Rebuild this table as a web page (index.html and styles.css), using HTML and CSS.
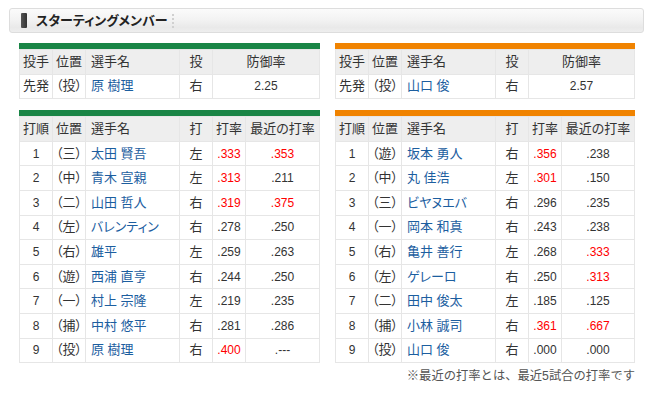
FILE: index.html
```html
<!DOCTYPE html>
<html lang="ja">
<head>
<meta charset="utf-8">
<link rel="stylesheet" href="styles.css">
</head>
<body>
<div class="page">
  <div class="title-bar">
    <span class="title-mark"></span>
    <h2 class="title">スターティングメンバー</h2>
    <span class="title-sep"></span>
  </div>

  <div class="grid">
    <div class="lineup green">
      <table class="tbl pitch">
        <colgroup><col class="c1"><col class="c2"><col class="c3"><col class="c4"><col class="c5"></colgroup>
        <tr class="head"><th>投手</th><th>位置</th><th class="name">選手名</th><th>投</th><th>防御率</th></tr>
        <tr><td>先発</td><td>（投）</td><td class="name">原 樹理</td><td>右</td><td class="num">2.25</td></tr>
      </table>
    </div>
    <div class="lineup orange">
      <table class="tbl pitch">
        <colgroup><col class="c1"><col class="c2"><col class="c3"><col class="c4"><col class="c5"></colgroup>
        <tr class="head"><th>投手</th><th>位置</th><th class="name">選手名</th><th>投</th><th>防御率</th></tr>
        <tr><td>先発</td><td>（投）</td><td class="name">山口 俊</td><td>右</td><td class="num">2.57</td></tr>
      </table>
    </div>

    <div class="lineup green">
      <table class="tbl bat">
        <colgroup><col class="c1"><col class="c2"><col class="c3"><col class="c4"><col class="c5"><col class="c6"></colgroup>
        <tr class="head"><th>打順</th><th>位置</th><th class="name">選手名</th><th>打</th><th>打率</th><th>最近の打率</th></tr>
        <tr><td class="num">1</td><td>（三）</td><td class="name">太田 賢吾</td><td>左</td><td class="num hot">.333</td><td class="num hot">.353</td></tr>
        <tr><td class="num">2</td><td>（中）</td><td class="name">青木 宣親</td><td>左</td><td class="num hot">.313</td><td class="num">.211</td></tr>
        <tr><td class="num">3</td><td>（二）</td><td class="name">山田 哲人</td><td>右</td><td class="num hot">.319</td><td class="num hot">.375</td></tr>
        <tr><td class="num">4</td><td>（左）</td><td class="name">バレンティン</td><td>右</td><td class="num">.278</td><td class="num">.250</td></tr>
        <tr><td class="num">5</td><td>（右）</td><td class="name">雄平</td><td>左</td><td class="num">.259</td><td class="num">.263</td></tr>
        <tr><td class="num">6</td><td>（遊）</td><td class="name">西浦 直亨</td><td>右</td><td class="num">.244</td><td class="num">.250</td></tr>
        <tr><td class="num">7</td><td>（一）</td><td class="name">村上 宗隆</td><td>左</td><td class="num">.219</td><td class="num">.235</td></tr>
        <tr><td class="num">8</td><td>（捕）</td><td class="name">中村 悠平</td><td>右</td><td class="num">.281</td><td class="num">.286</td></tr>
        <tr><td class="num">9</td><td>（投）</td><td class="name">原 樹理</td><td>右</td><td class="num hot">.400</td><td class="num">.---</td></tr>
      </table>
    </div>
    <div class="lineup orange">
      <table class="tbl bat">
        <colgroup><col class="c1"><col class="c2"><col class="c3"><col class="c4"><col class="c5"><col class="c6"></colgroup>
        <tr class="head"><th>打順</th><th>位置</th><th class="name">選手名</th><th>打</th><th>打率</th><th>最近の打率</th></tr>
        <tr><td class="num">1</td><td>（遊）</td><td class="name">坂本 勇人</td><td>右</td><td class="num hot">.356</td><td class="num">.238</td></tr>
        <tr><td class="num">2</td><td>（中）</td><td class="name">丸 佳浩</td><td>左</td><td class="num hot">.301</td><td class="num">.150</td></tr>
        <tr><td class="num">3</td><td>（三）</td><td class="name">ビヤヌエバ</td><td>右</td><td class="num">.296</td><td class="num">.235</td></tr>
        <tr><td class="num">4</td><td>（一）</td><td class="name">岡本 和真</td><td>右</td><td class="num">.243</td><td class="num">.238</td></tr>
        <tr><td class="num">5</td><td>（右）</td><td class="name">亀井 善行</td><td>左</td><td class="num">.268</td><td class="num hot">.333</td></tr>
        <tr><td class="num">6</td><td>（左）</td><td class="name">ゲレーロ</td><td>右</td><td class="num">.250</td><td class="num hot">.313</td></tr>
        <tr><td class="num">7</td><td>（二）</td><td class="name">田中 俊太</td><td>左</td><td class="num">.185</td><td class="num">.125</td></tr>
        <tr><td class="num">8</td><td>（捕）</td><td class="name">小林 誠司</td><td>右</td><td class="num hot">.361</td><td class="num hot">.667</td></tr>
        <tr><td class="num">9</td><td>（投）</td><td class="name">山口 俊</td><td>右</td><td class="num">.000</td><td class="num">.000</td></tr>
      </table>
    </div>
  </div>

  <p class="note">※最近の打率とは、最近5試合の打率です</p>
</div>
</body>
</html>
```

FILE: styles.css
```css
html, body {
  margin: 0;
  padding: 0;
  background: #ffffff;
}

body {
  font-family: "Liberation Sans", "Noto Sans CJK JP", sans-serif;
  font-feature-settings: "palt";
  color: #333333;
  font-size: 13px;
}

.page {
  padding: 8px 6px 0 9px;
}

.title-bar {
  height: 23px;
  display: flex;
  align-items: center;
  border: 1px solid #dddddd;
  border-radius: 3px;
  background: linear-gradient(#fbfbfb 0%, #f3f3f3 45%, #e9e9e9 80%, #eeeeee 100%);
  padding-left: 11px;
}

.title-mark {
  width: 6px;
  height: 15px;
  background: linear-gradient(90deg, #555555, #333333);
  border-radius: 1px;
  margin-right: 9px;
}

.title {
  margin: 0;
  font-size: 13px;
  font-weight: bold;
  color: #222222;
  line-height: 23px;
}

.title-sep {
  width: 0;
  height: 14px;
  margin-left: 5px;
  border-left: 2px dotted #d0d0d0;
}

.grid {
  display: grid;
  grid-template-columns: 301px 300px;
  column-gap: 15px;
  row-gap: 11px;
  margin-top: 10px;
  padding-left: 10px;
}

.lineup {
  border-top: 6px solid #1a8546;
}

.lineup.orange {
  border-top-color: #f08300;
}

.tbl {
  width: 100%;
  border-collapse: collapse;
  table-layout: fixed;
}

.tbl th,
.tbl td {
  border: 1px solid #e6e6e6;
  padding: 0;
  text-align: center;
  font-weight: normal;
  white-space: nowrap;
  height: 23.6px;
  line-height: 16px;
}

.tbl th {
  background: #eeeeee;
  color: #333333;
}

.tbl .name {
  text-align: left;
  padding-left: 5px;
}

.tbl td.name {
  color: #1c5e9f;
}

.tbl .num {
  font-size: 12px;
}

.tbl .hot {
  color: #ff0000;
}

.c1, .c2, .c4 { width: 33px; }
.pitch .c3 { width: 94px; }
.bat .c3 { width: 94px; }
.bat .c5 { width: 33px; }

.note {
  margin: 5px 9px 0 0;
  text-align: right;
  font-size: 12.3px;
  font-feature-settings: normal;
  line-height: 16px;
  color: #555555;
}
```
